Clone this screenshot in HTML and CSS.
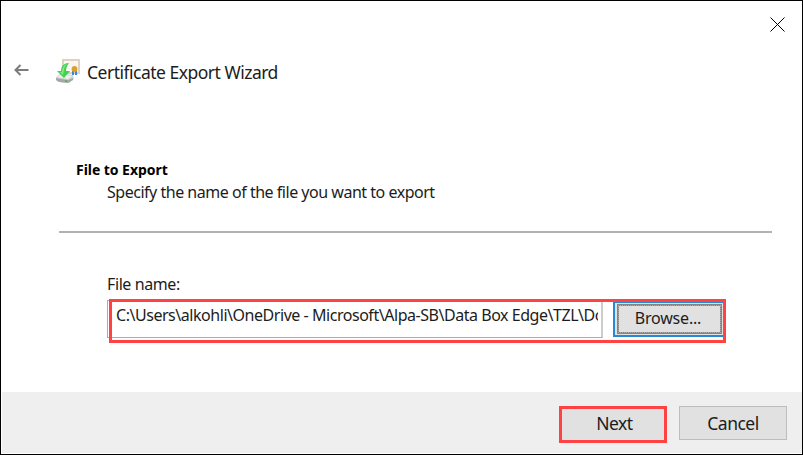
FILE: index.html
```
<!DOCTYPE html>
<html lang="en">
<head>
<meta charset="utf-8">
<title>Certificate Export Wizard</title>
<link rel="stylesheet" href="styles.css">
</head>
<body>
<main class="window">
  <header class="titlebar">
    <button class="close" aria-label="Close"><svg width="15" height="15" viewBox="0 0 15 15"><path d="M.5.5l14 14M14.500.5l-14 14"/></svg></button>
  </header>
  <div class="heading">
    <svg class="back" width="15" height="12" viewBox="0 0 15 12"><path d="M14.500 6H1.500M6.500 1L1.500 6l5 5"/></svg>
    <svg class="wizard-icon" width="24" height="24" viewBox="0 0 24 24">
      <path fill="#ddd3c3" d="M6 0h18v15H6z"/><path fill="#f8f7f3" d="M8 2h14v11H8z"/>
      <path fill="#d3d5d6" d="M0 18l5-4 12 2 1 4-5 4-10-1-3-2z"/><path fill="#eeefef" d="M1 18l5-3 10 2-4 3z"/>
      <path fill="#a5a8aa" d="M0 19l12 2 5-2v2l-5 3-9-1-3-2z"/><path fill="#56b65a" d="M9 21h2v2H9z"/>
      <path fill="#3a85e0" d="M16 12h2v4h-2zM19 12h2v4h-2z"/>
      <circle cx="18.500" cy="10" r="2.900" fill="#dda02c"/>
      <path fill="#45d052" d="M13 4c-5 0-8 3-8 8H1l7 7 6-7h-4c0-3 1-5 3-8z"/>
      <path fill="#80ec82" d="M11 5c-3 1-5 4-5 8H4l3 3 1-5c0-2 1-4 3-6z"/>
    </svg>
    <h1>Certificate Export Wizard</h1>
  </div>
  <section class="intro">
    <h2>File to Export</h2>
    <p>Specify the name of the file you want to export</p>
  </section>
  <section class="form">
    <label>File name:</label>
    <div class="row">
      <div class="field"><span>C:\Users\alkohli\OneDrive - Microsoft\Alpa-SB\Data Box Edge\TZL\Do</span></div>
      <button class="browse"><span>Browse...</span></button>
      <i class="mark"></i>
    </div>
  </section>
  <footer>
    <button class="next">Next</button>
    <button class="cancel">Cancel</button>
  </footer>
</main>
</body>
</html>
```
FILE: styles.css
```
* { box-sizing: border-box; margin: 0; padding: 0; }
body, button { font-family: "Noto Sans", sans-serif; color: #1c1c1c; }
button { border: 0; background: none; }
.window { width: 803px; height: 455px; border: 1px solid #000; background: #fff; display: flex; flex-direction: column; overflow: hidden; }
.titlebar { height: 56px; flex: none; display: flex; justify-content: flex-end; padding: 16px 17px 0 0; }
.close { width: 15px; height: 15px; }
svg { display: block; fill: none; flex: none; }
.close path { stroke: #000; stroke-width: 1; }
.heading { height: 28px; display: flex; align-items: center; padding-left: 13px; }
.back { margin-top: -3px; }
.back path { stroke: #7c7c7c; stroke-width: 2; }
.wizard-icon { margin: -1px 7px 0 27px; }
h1 { font-size: 17.500px; line-height: 28px; font-weight: 400; white-space: nowrap; letter-spacing: -.500px; margin-top: 1px; }
.intro { height: 148px; flex: none; margin: 0 30px 0 58px; padding: 73px 0 0 17px; border-bottom: 2px solid #b2b2b2; }
h2 { font-size: 14px; line-height: 23px; font-weight: 700; color: #000; letter-spacing: -.050px; }
p { font-size: 16px; line-height: 22px; padding-left: 31px; white-space: nowrap; letter-spacing: -.480px; }
.form { padding: 40px 0 0 106px; height: 159px; flex: none; }
label { display: block; height: 27px; line-height: 22px; font-size: 16px; letter-spacing: -.400px; }
.row { position: relative; display: flex; width: 620px; height: 44px; }
.field { width: 496px; height: 38px; border: 1px solid #aaa; border-right: 2px solid #ccc; padding: 0 3px 0 8px; }
.field span { display: block; overflow: hidden; white-space: nowrap; font-size: 16px; line-height: 29px; letter-spacing: -.460px; }
.browse { width: 111px; height: 36px; margin: 1px 0 0 10px; border: 2px solid #2788d8; border-right: 0; background: #e1e1e1; padding: 1px 2px; font-size: 16px; letter-spacing: -.200px; }
.browse span { display: flex; align-items: center; justify-content: center; width: 105px; height: 30px; padding: 0 3px 2px 0; border: 2px solid #858585; outline: 1px dotted #aaa; outline-offset: -2px; }
.mark { position: absolute; left: 2px; top: -1px; width: 617px; height: 44px; border: 3px solid #ff4343; }
footer { height: 61px; flex: none; margin-left: 1px; background: #efefef; display: flex; padding: 14px 0 0 557px; }
footer button { font-size: 17.500px; height: 37px; width: 108px; background: #e1e1e1; letter-spacing: -.500px; }
.next { border: 3px solid #ff4343; padding: 0 0 3px 3px; }
footer .cancel { height: 34px; margin-left: 12px; border: 1px solid #bdbdbd; }
```
